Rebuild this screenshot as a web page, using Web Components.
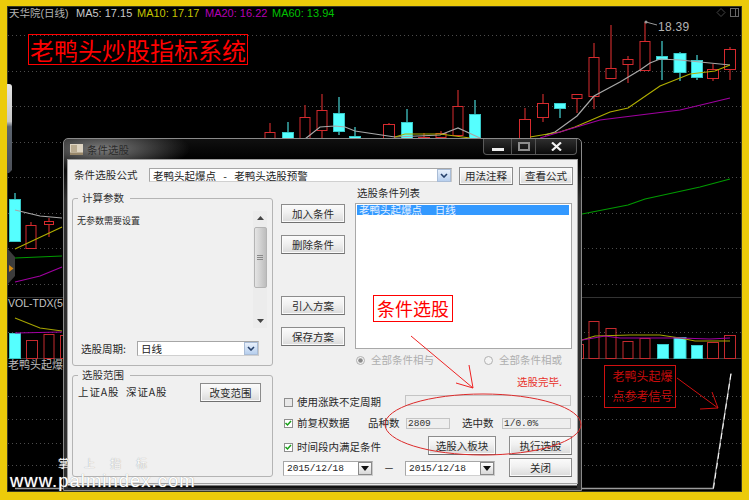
<!DOCTYPE html>
<html lang="zh">
<head>
<meta charset="utf-8">
<title>条件选股</title>
<style>
  html, body { margin: 0; height: 100%; }
  body {
    position: relative;
    width: 749px;
    height: 500px;
    overflow: hidden;
    box-sizing: border-box;
    padding: 6px 7px 8px;
    background: #eccb0a;
    font-family: "Liberation Sans", "Noto Sans CJK SC", sans-serif;
  }
</style>
</head>
<body>
<stock-chart></stock-chart>
<win-window>
  <span slot="title">条件选股</span>
  <picker-form></picker-form>
</win-window>
<chart-markup></chart-markup>

<script>
const CJK = '"Noto Sans CJK SC", "Liberation Sans", sans-serif';

// x, bodyTop, bodyBottom, wickTop, wickBottom, kind (r red, c cyan), half width
const CANDLES = [
  [15, 199, 241, 193, 199, 'c', 6], [31, 225, 248, 222, 225, 'r', 5.5], [49, 221, 224, 218, 237, 'r', 5],
  [270, 132, 145, 123, 132, 'r', 5.5], [288, 132, 145, 122, 132, 'c', 6], [305, 117, 145, 105, 117, 'r', 5.5],
  [322, 110, 130, 94, 145, 'r', 5.5], [339, 113, 131, 97, 135, 'c', 6], [355, 136, 145, 127, 136, 'c', 6],
  [389, 124, 145, 123, 124, 'r', 6], [407, 122, 145, 109, 122, 'c', 6], [424, 137, 145, 133, 137, 'r', 6],
  [441, 133, 137, 131, 140, 'r', 5.5], [458, 106, 135, 90, 106, 'r', 5.5], [475, 114, 145, 100, 114, 'c', 6],
  [525, 119, 145, 108, 119, 'r', 6], [543, 103, 117, 94, 122, 'r', 6], [560, 103, 108, 108, 118, 'c', 6],
  [577, 94, 98, 98, 113, 'r', 5.5], [594, 57, 96, 43, 109, 'r', 5.5], [611, 68, 78, 25, 68, 'r', 5.5],
  [628, 59, 64, 56, 83, 'r', 5.5], [645, 41, 70, 22, 41, 'r', 5.5], [662, 56, 59, 41, 80, 'c', 6],
  [680, 53, 72, 52, 81, 'c', 6.5], [697, 60, 77, 55, 80, 'c', 6], [713, 69, 78, 64, 81, 'r', 6],
  [730, 49, 69, 47, 80, 'r', 6]
];

// x, top, kind, half width: every volume bar stands on the y=358 baseline
const VOLUMES = [
  [15, 333, 'c', 6], [32, 340, 'r', 6], [49, 334, 'r', 5.5], [64, 335, 'r', 4],
  [576, 344, 'r', 8], [594, 321, 'r', 5.5], [611, 328, 'r', 5.5], [628, 341, 'r', 5.5], [645, 338, 'r', 5.5],
  [663, 344, 'c', 6], [680, 337, 'c', 6.5], [697, 345, 'c', 6], [713, 342, 'r', 6], [730, 335, 'r', 6]
];

const LINES = [
  ['#a8a8a8', '15,210 40,216 62,218'],
  ['#a8a8a8', '305,139 320,127 335,126 345,127 355,131 375,134 395,137 440,135 458,128 480,138'],
  ['#a8a8a8', '545,135 555,132 577,116 594,96 620,82 640,70 650,63 660,59 680,60 700,62 730,65'],
  ['#b0ae00', '15,249 62,227'],
  ['#b0ae00', '395,137 405,134 440,134 470,138'],
  ['#b0ae00', '530,137 560,132 575,127 610,112 628,108 660,86 690,74 715,71 730,65'],
  ['#a000a0', '15,282 40,276 62,267'],
  ['#a000a0', '540,138 600,120 680,110 730,98'],
  ['#009a00', '15,258 62,256'],
  ['#009a00', '582,214 628,205 645,199 700,187 730,179'],
  ['#a5a300', '15,318 40,328 62,331'],
  ['#a000a0', '15,333 62,332'],
  ['#a5a300', '582,340 595,336 630,335 660,335 680,338 695,341 730,341'],
  ['#a000a0', '582,340 605,336 620,338 680,338 710,339 730,338']
];

function candleMarkup([x, top, bottom, wickTop, wickBottom, kind, half]) {
  const cyan = kind === 'c';
  const wick = cyan ? '#55ffff' : '#a82424';
  const body = cyan
    ? `fill="#55ffff" stroke="#37c8c8"`
    : `fill="#000" stroke="#d62a2e"`;
  return `<line x1="${x}" x2="${x}" y1="${wickTop}" y2="${wickBottom}" stroke="${wick}" stroke-width="${cyan ? 1 : 1.4}"/>
    <rect x="${x - half + 0.5}" y="${top + 0.5}" width="${half * 2 - 1}" height="${bottom - top}" ${body}/>`;
}

function volumeMarkup([x, top, kind, half]) {
  const fill = kind === 'c' ? 'fill="#55ffff" stroke="#37c8c8"' : 'fill="#000" stroke="#c42a2e"';
  return `<rect x="${x - half + 0.5}" y="${top + 0.5}" width="${half * 2 - 1}" height="${358 - top}" ${fill}/>`;
}

const chartTemplate = document.createElement('template');
chartTemplate.innerHTML = `
  <style>
    :host {
      display: block;
      position: relative;
      width: 735px;
      height: 486px;
      background: #000;
      box-shadow: inset 0 0 0 1px #3a3a20;
      overflow: hidden;
    }
    svg { display: block; }
    .legend {
      position: absolute;
      left: 2px;
      top: 1px;
      display: flex;
      font: 11px/13px "Liberation Sans", "Noto Sans CJK SC", sans-serif;
      white-space: pre;
    }
    .name { color: #b4b4b4; width: 67px; font-size: 10.5px; }
    .ma5 { color: #c8c8c8; width: 61px; }
    .ma10 { color: #c4c400; width: 68px; }
    .ma20 { color: #b400b4; width: 67px; }
    .ma60 { color: #00c000; }
    .brand {
      position: absolute;
      left: 21px;
      top: 28px;
      width: 220px;
      height: 31px;
      box-sizing: border-box;
      border: 1px solid #f00;
      color: #f00;
      font: 24px/29px ${CJK};
      text-align: center;
      white-space: nowrap;
    }
  </style>
  <svg width="735" height="486" viewBox="7 6 735 486"></svg>
  <div class="legend"><span class="name">天华院(日线)</span><span class="ma5">MA5: 17.15</span><span class="ma10">MA10: 17.17</span><span class="ma20">MA20: 16.22</span><span class="ma60">MA60: 13.94</span></div>
  <div class="brand">老鸭头炒股指标系统</div>
`;

class StockChart extends HTMLElement {
  constructor() {
    super();
    this.attachShadow({ mode: 'open' });
    this.shadowRoot.appendChild(chartTemplate.content.cloneNode(true));
    this.shadowRoot.querySelector('svg').innerHTML = this.drawing();
  }

  drawing() {
    const dotted = [35, 71, 106, 142, 177, 213, 248, 284, 332, 396, 419, 443, 465]
      .map((y) => `<line x1="8" x2="741" y1="${y}.5" y2="${y}.5" stroke="#4c4c4c" stroke-dasharray="1 3"/>`)
      .join('');
    const lines = LINES
      .map(([color, points]) => `<polyline points="${points}" fill="none" stroke="${color}" stroke-width="1.2"/>`)
      .join('');
    return `
      <defs><linearGradient id="tab" x1="0" x2="0" y1="0" y2="1">
        <stop offset="0" stop-color="#e4e4e4"/><stop offset=".42" stop-color="#c8c8c8"/>
        <stop offset=".48" stop-color="#5c6470"/><stop offset="1" stop-color="#4c5058"/>
      </linearGradient></defs>
      ${dotted}
      <line x1="8" x2="741" y1="297.5" y2="297.5" stroke="#333"/>
      <line x1="8" x2="741" y1="358.5" y2="358.5" stroke="#3c3c3c"/>
      ${CANDLES.map(candleMarkup).join('')}
      ${VOLUMES.map(volumeMarkup).join('')}
      ${lines}
      <path d="M7 84h2q3 0 3 3v83l-3 3h-2z" fill="url(#tab)"/>
      <path d="M7 248l8 9v19l-8 9z" fill="#3c3c3c"/>
      <path d="M9 265l4.500 3.500-4.500 3.500z" fill="#d68a10"/>
      <path d="M15 488.500h698l18-115" fill="none" stroke="#9c9c9c" stroke-width="1.300"/>
      <path d="M713.500 488.500l17.500-115" fill="none" stroke="#fff" stroke-width="1" stroke-dasharray="6 4"/>
      <circle cx="646" cy="22" r="1.500" fill="#999"/>
      <path d="M646 22l11 3" stroke="#999" fill="none"/>
      <text x="658" y="31" fill="#b4b4b4" font-family="Liberation Sans" font-size="12" letter-spacing=".3">18.39</text>
      <path d="M721 8.500l4 4-4 4-4-4z" fill="none" stroke="#444"/>
      <rect x="730.500" y="8.500" width="8" height="8" fill="none" stroke="#666"/>
      <path d="M735.500 8.500v8" stroke="#666"/>
      <text x="8" y="307" fill="#c4c4c4" font-family="Liberation Sans" font-size="10.500">VOL-TDX(5</text>
      <text x="8" y="369" fill="#bbb" font-family="Noto Sans CJK SC" font-size="11">老鸭头起爆</text>
    `;
  }
}
customElements.define('stock-chart', StockChart);

const windowTemplate = document.createElement('template');
windowTemplate.innerHTML = `
  <style>
    :host {
      position: absolute;
      left: 63px;
      top: 138px;
      width: 519px;
      height: 353px;
      box-sizing: border-box;
      display: flex;
      flex-direction: column;
      padding: 0 4px 7px;
      border: 1px solid #8a8a8a;
      border-radius: 5px 5px 0 0;
      background:
        radial-gradient(ellipse 88px 24px at 38px 10px, #7c7c7c, rgba(90,90,90,0)),
        linear-gradient(#101010, #000 20px, #000 24px, #2e2e2e 60px, #2e2e2e);
    }
    .bar {
      display: flex;
      align-items: flex-start;
      height: 21px;
      flex: none;
    }
    .icon { margin: 5px 4px 0 2px; flex: none; }
    .title {
      margin-top: 4px;
      color: #2c2c2c;
      font: 10.5px/13px ${CJK};
    }
    .controls {
      display: flex;
      margin-left: auto;
      height: 16px;
      border: 1px solid #5a5a5a;
      border-top: 0;
      border-radius: 0 0 4px 4px;
      background: linear-gradient(#2e2e2e, #0a0a0a);
      box-sizing: border-box;
    }
    .controls span {
      display: flex;
      align-items: center;
      justify-content: center;
      border-right: 1px solid #555;
    }
    .controls span:nth-child(1) { width: 27px; }
    .controls span:nth-child(2) { width: 23px; }
    .controls span:nth-child(3) { width: 40px; border: 0; }
    .client {
      flex: 1;
      min-height: 0;
      background: #f0f0f0;
      box-shadow: 0 0 0 1px #a0a0a0, 0 2px 0 #e8e8e8, 0 3px 0 #777, 0 5px 0 #111;
    }
  </style>
  <div class="bar">
    <svg class="icon" width="13" height="11" viewBox="0 0 13 11">
      <rect width="13" height="11" fill="#ded4c2"/>
      <rect x="1" y="1" width="6" height="7" fill="#b9ab90"/>
      <rect y="8.500" width="13" height="2.500" fill="#98876a"/>
    </svg>
    <div class="title"><slot name="title"></slot></div>
    <div class="controls">
      <span><svg width="12" height="8" viewBox="0 0 12 8"><rect y="5" width="12" height="3" fill="#eee"/></svg></span>
      <span><svg width="12" height="9" viewBox="0 0 12 9"><rect x="1" y="1" width="10" height="7" fill="none" stroke="#8e8e8e" stroke-width="2"/></svg></span>
      <span><svg width="11" height="9" viewBox="0 0 11 9"><path d="M1 0.500l9 8M10 0.500l-9 8" stroke="#f2f2f2" stroke-width="2.200" fill="none"/></svg></span>
    </div>
  </div>
  <div class="client"><slot></slot></div>
`;

class WinWindow extends HTMLElement {
  constructor() {
    super();
    this.attachShadow({ mode: 'open' });
    this.shadowRoot.appendChild(windowTemplate.content.cloneNode(true));
  }
}
customElements.define('win-window', WinWindow);

class WinButton extends HTMLElement {
  constructor() {
    super();
    this.attachShadow({ mode: 'open' });
    this.shadowRoot.innerHTML = `
      <style>
        :host {
          display: flex;
          align-items: center;
          justify-content: center;
          box-sizing: border-box;
          height: 19px;
          border: 1px solid #8c8c8c;
          border-bottom-color: #707070;
          background: linear-gradient(#fbfbfb, #f0f0f0 45%, #dadada);
          box-shadow: inset 0 0 0 1px #fafafa;
          color: #2a2a2a;
          font: 10.5px/12px ${CJK};
          white-space: nowrap;
        }
      </style>
      <slot></slot>
    `;
  }
}
customElements.define('win-button', WinButton);

class GroupBox extends HTMLElement {
  constructor() {
    super();
    this.attachShadow({ mode: 'open' });
    this.shadowRoot.innerHTML = `
      <style>
        :host { display: block; box-sizing: border-box; }
        fieldset {
          box-sizing: border-box;
          height: 100%;
          margin: 0;
          padding: 0;
          border: 1px solid #b4b4b4;
          border-radius: 3px;
          min-width: 0;
        }
        legend {
          margin-left: 5px;
          padding: 0 6px 0 4px;
          color: #333;
          font: 10.5px/14px ${CJK};
        }
      </style>
      <fieldset>
        <legend><slot name="legend"></slot></legend>
        <slot></slot>
      </fieldset>
    `;
  }
}
customElements.define('group-box', GroupBox);

// the drop-down: blue chevron by default, kind="date" for the flat black arrow
class ComboBox extends HTMLElement {
  constructor() {
    super();
    this.attachShadow({ mode: 'open' });
    const date = this.getAttribute('kind') === 'date';
    this.shadowRoot.innerHTML = `
      <style>
        :host {
          display: flex;
          align-items: center;
          box-sizing: border-box;
          height: 15px;
          padding-left: 3px;
          border: 1px solid #a6a6a6;
          border-right-color: #c8c8c8;
          border-bottom-color: #d0d0d0;
          background: #fff;
          color: #222;
          font: ${date ? '9.5px/13px "Liberation Mono", monospace' : `10.5px/13px ${CJK}`};
          white-space: pre;
        }
        .text { flex: 1; min-width: 0; overflow: hidden; }
        .drop {
          flex: none;
          display: flex;
          align-items: center;
          justify-content: center;
          width: 14px;
          height: 13px;
          box-sizing: border-box;
          border: 1px solid ${date ? '#8a8a8a' : '#a9bcd6'};
          background: ${date ? 'linear-gradient(#fff, #d8d8d8)' : 'linear-gradient(#e8f0fb, #b7cfee)'};
        }
      </style>
      <div class="text"><slot></slot></div>
      <div class="drop">
        ${date
          ? '<svg width="8" height="5" viewBox="0 0 8 5"><path d="M0 0h8l-4 5z" fill="#111"/></svg>'
          : '<svg width="8" height="5" viewBox="0 0 8 5"><path d="M1 1l3 3 3-3" fill="none" stroke="#26406a" stroke-width="1.600"/></svg>'}
      </div>
    `;
  }
}
customElements.define('combo-box', ComboBox);

class CheckBox extends HTMLElement {
  constructor() {
    super();
    this.attachShadow({ mode: 'open' });
    const mark = this.hasAttribute('checked')
      ? '<path d="M1.500 4l2 2 3.500-4" fill="none" stroke="#18a018" stroke-width="1.500"/>'
      : '';
    this.shadowRoot.innerHTML = `
      <style>
        :host {
          display: flex;
          align-items: center;
          height: 12px;
          color: #2a2a2a;
          font: 10.5px/12px ${CJK};
          white-space: nowrap;
        }
        svg { flex: none; margin-right: 4px; }
      </style>
      <svg width="9" height="9" viewBox="0 0 9 9">
        <rect x=".5" y=".5" width="8" height="8" fill="${mark ? '#fff' : '#e8e8e8'}" stroke="#8e8e8e"/>${mark}
      </svg>
      <slot></slot>
    `;
  }
}
customElements.define('check-box', CheckBox);

class RadioButton extends HTMLElement {
  constructor() {
    super();
    this.attachShadow({ mode: 'open' });
    const dot = this.hasAttribute('checked') ? '<circle cx="4.500" cy="4.500" r="2.300" fill="#8c8c8c"/>' : '';
    this.shadowRoot.innerHTML = `
      <style>
        :host {
          display: flex;
          align-items: center;
          height: 12px;
          color: #aeaeae;
          font: 10.5px/12px ${CJK};
          white-space: nowrap;
        }
        svg { flex: none; margin-right: 6px; }
      </style>
      <svg width="9" height="9" viewBox="0 0 9 9">
        <circle cx="4.500" cy="4.500" r="4" fill="#f4f4f4" stroke="#b0b0b0"/>${dot}
      </svg>
      <slot></slot>
    `;
  }
}
customElements.define('radio-button', RadioButton);

class ReadField extends HTMLElement {
  constructor() {
    super();
    this.attachShadow({ mode: 'open' });
    this.shadowRoot.innerHTML = `
      <style>
        :host {
          display: block;
          box-sizing: border-box;
          height: 11px;
          padding-left: 1px;
          border: 1px solid #c4c4c4;
          background: #eeeeee;
          color: #333;
          font: 9.5px/9px "Liberation Mono", monospace;
          white-space: nowrap;
        }
      </style>
      <slot></slot>
    `;
  }
}
customElements.define('read-field', ReadField);

const formTemplate = document.createElement('template');
formTemplate.innerHTML = `
  <style>
    :host {
      display: block;
      height: 100%;
      padding-top: 7px;
      box-sizing: border-box;
      color: #2a2a2a;
      font: 10.5px/12px ${CJK};
    }
    .head {
      display: flex;
      align-items: flex-start;
      height: 18px;
      padding-left: 6px;
    }
    .head .caption { width: 75px; margin-top: 2px; letter-spacing: 0.1px; }
    .formula { width: 303px; margin-top: 1px; height: 14px; word-spacing: 5px; }
    .head win-button { width: 54px; height: 18px; margin-left: 6px; }
    .head .formula + win-button { margin-left: 7px; }

    .main {
      display: grid;
      grid-template-columns: 201px 1fr;
      margin-top: 6px;
      padding-left: 4px;
    }
    .left { display: flex; flex-direction: column; gap: 2px; }
    .params { height: 175px; }
    .range { height: 109px; }

    .params-body {
      display: grid;
      grid-template-columns: 1fr 14px;
      grid-template-rows: 117px 15px;
      row-gap: 13px;
      padding: 6px 5px 0 0;
    }
    .note { padding: 4px 0 0 4px; font-size: 9px; }
    .scroll {
      display: flex;
      flex-direction: column;
      align-items: center;
      background: #ececec;
    }
    .thumb {
      flex: none;
      width: 13px;
      height: 61px;
      margin-top: 7px;
      box-sizing: border-box;
      border: 1px solid #b4b4b4;
      border-radius: 2px;
      background: linear-gradient(90deg, #e4e4e4, #cfcfcf 55%, #bdbdbd);
      display: flex;
      align-items: center;
      justify-content: center;
    }
    .arrow { margin-top: 5px; flex: none; }
    .arrow.down { margin: auto 0 5px; }
    .period { grid-column: 1 / -1; display: flex; align-items: center; padding-left: 8px; }
    .period span { width: 56px; }
    .period combo-box { width: 122px; }

    .range-body {
      display: flex;
      align-items: flex-start;
      padding-left: 5px;
    }
    .range-body span { width: 122px; margin-top: 4px; letter-spacing: 0.9px; white-space: pre; }
    .range-body win-button { width: 61px; margin-top: 1px; }

    .right { min-width: 0; }
    .upper { display: flex; height: 197px; }
    .actions {
      display: flex;
      flex-direction: column;
      width: 64px;
      margin-left: 8px;
      padding-top: 13px;
      gap: 12px;
    }
    .actions .split { margin-top: 30px; }
    .conditions { width: 217px; margin-left: 10px; }
    .conditions .caption { margin: -4px 0 4px 2px; }
    .list {
      height: 146px;
      box-sizing: border-box;
      padding: 1px;
      border: 1px solid #a8a8a8;
      background: #fff;
    }
    .picked {
      height: 10px;
      padding-left: 2px;
      margin-right: 1px;
      background: #3399ff;
      color: #e8f2ff;
      line-height: 10px;
      white-space: pre;
      word-spacing: 4px;
    }
    .radios { display: flex; margin: 5px 0 0 1px; }
    .radios radio-button { flex: none; }
    .radios radio-button:first-child { width: 128px; }
    .status { margin: 10px 0 0 162px; color: #e8342c; white-space: nowrap; }

    .lower { margin: 7px 0 0 11px; width: 288px; }
    .row { display: flex; align-items: center; }
    .row-a { height: 14px; }
    .row-a check-box { width: 121px; }
    .row-a read-field { width: 166px; align-self: flex-start; }
    .row-b { height: 14px; margin-top: 7px; }
    .row-b check-box { width: 84px; }
    .row-b .tag { width: 38px; }
    .row-b .tag + read-field { width: 44px; }
    .row-b .tag.second { width: 40px; margin-left: 12px; }
    .row-b .tag.second + read-field { width: 69px; }
    .row-c { height: 19px; margin-top: 6px; }
    .row-c check-box { width: 144px; margin-top: 3px; }
    .row-c win-button:nth-of-type(1) { width: 68px; }
    .row-c win-button:nth-of-type(2) { width: 63px; margin-left: 13px; }
    .row-d { height: 19px; margin-top: 3px; margin-left: -1px; }
    .row-d combo-box { width: 90px; margin-top: 2px; }
    .row-d .dash { width: 32px; text-align: center; }
    .row-d win-button { width: 63px; margin-left: 14px; }
  </style>

  <div class="head">
    <span class="caption">条件选股公式</span>
    <combo-box class="formula">老鸭头起爆点 - 老鸭头选股预警</combo-box>
    <win-button>用法注释</win-button>
    <win-button>查看公式</win-button>
  </div>

  <div class="main">
    <div class="left">
      <group-box class="params">
        <span slot="legend">计算参数</span>
        <div class="params-body">
          <div class="note">无参数需要设置</div>
          <div class="scroll">
            <svg class="arrow" width="7" height="4" viewBox="0 0 7 4"><path d="M3.500 0l3.500 4h-7z" fill="#444"/></svg>
            <div class="thumb">
              <svg width="6" height="5" viewBox="0 0 6 5"><path d="M0 .5h6M0 2.500h6M0 4.500h6" stroke="#888"/></svg>
            </div>
            <svg class="arrow down" width="7" height="4" viewBox="0 0 7 4"><path d="M0 0h7l-3.500 4z" fill="#444"/></svg>
          </div>
          <div class="period">
            <span>选股周期:</span>
            <combo-box>日线</combo-box>
          </div>
        </div>
      </group-box>
      <group-box class="range">
        <span slot="legend">选股范围</span>
        <div class="range-body">
          <span>上证A股  深证A股</span>
          <win-button>改变范围</win-button>
        </div>
      </group-box>
    </div>

    <div class="right">
      <div class="upper">
        <div class="actions">
          <win-button>加入条件</win-button>
          <win-button>删除条件</win-button>
          <win-button class="split">引入方案</win-button>
          <win-button>保存方案</win-button>
        </div>
        <div class="conditions">
          <div class="caption">选股条件列表</div>
          <div class="list"><div class="picked">老鸭头起爆点  日线</div></div>
          <div class="radios">
            <radio-button checked>全部条件相与</radio-button>
            <radio-button>全部条件相或</radio-button>
          </div>
          <div class="status">选股完毕.</div>
        </div>
      </div>

      <div class="lower">
        <div class="row row-a">
          <check-box>使用涨跌不定周期</check-box>
          <read-field></read-field>
        </div>
        <div class="row row-b">
          <check-box checked>前复权数据</check-box>
          <span class="tag">品种数</span>
          <read-field>2809</read-field>
          <span class="tag second">选中数</span>
          <read-field>1/0.0%</read-field>
        </div>
        <div class="row row-c">
          <check-box checked>时间段内满足条件</check-box>
          <win-button>选股入板块</win-button>
          <win-button>执行选股</win-button>
        </div>
        <div class="row row-d">
          <combo-box kind="date">2015/12/18</combo-box>
          <span class="dash">－</span>
          <combo-box kind="date">2015/12/18</combo-box>
          <win-button>关闭</win-button>
        </div>
      </div>
    </div>
  </div>
`;

class PickerForm extends HTMLElement {
  constructor() {
    super();
    this.attachShadow({ mode: 'open' });
    this.shadowRoot.appendChild(formTemplate.content.cloneNode(true));
  }
}
customElements.define('picker-form', PickerForm);

// hand-drawn notes that somebody put on top of the screenshot
const markupTemplate = document.createElement('template');
markupTemplate.innerHTML = `
  <style>
    :host {
      position: absolute;
      inset: 0;
      pointer-events: none;
      font-family: ${CJK};
    }
    svg { position: absolute; left: 0; top: 0; }
    .tag { position: absolute; box-sizing: border-box; }
    .screen {
      left: 373px;
      top: 295px;
      width: 80px;
      height: 27px;
      border: 1px solid #f00;
      background: #fff;
      color: #f00;
      font-size: 18px;
      line-height: 25px;
      text-align: center;
      white-space: nowrap;
    }
    .signal {
      left: 604px;
      top: 365px;
      width: 72px;
      height: 43px;
      padding: 0 0 0 5px;
      border: 1px solid #d01010;
      color: #c80c0c;
      font-size: 12px;
      line-height: 20px;
      text-align: center;
      white-space: nowrap;
    }
    .mark {
      left: 58px;
      top: 458px;
      color: #fafafa;
      font: 11px/12px "Liberation Sans", "Noto Sans CJK SC", sans-serif;
      letter-spacing: 15px;
      text-shadow: 0 0 1px #8c8c8c;
      white-space: nowrap;
    }
    .site {
      left: 10px;
      top: 474px;
      color: #fff;
      font: 18.5px/14px "Liberation Sans", sans-serif;
      letter-spacing: 1px;
      text-shadow: 0 0 1px #8c8c8c;
      white-space: nowrap;
    }
  </style>
  <svg width="749" height="500" viewBox="0 0 749 500" fill="none">
    <ellipse cx="483" cy="424.500" rx="98" ry="30.500" stroke="#dc2a2a"/>
    <path d="M411 336l62 52M469 365l4 23-17-5" stroke="#ee2222"/>
    <path d="M677 378l41 30M712 392l6 16-18 1" stroke="#d01010"/>
  </svg>
  <div class="tag screen">条件选股</div>
  <div class="tag signal">老鸭头起爆<br>点参考信号</div>
  <div class="tag mark">掌上指标</div>
  <div class="tag site">www.palmindex.com</div>
`;

class ChartMarkup extends HTMLElement {
  constructor() {
    super();
    this.attachShadow({ mode: 'open' });
    this.shadowRoot.appendChild(markupTemplate.content.cloneNode(true));
  }
}
customElements.define('chart-markup', ChartMarkup);
</script>
</body>
</html>
